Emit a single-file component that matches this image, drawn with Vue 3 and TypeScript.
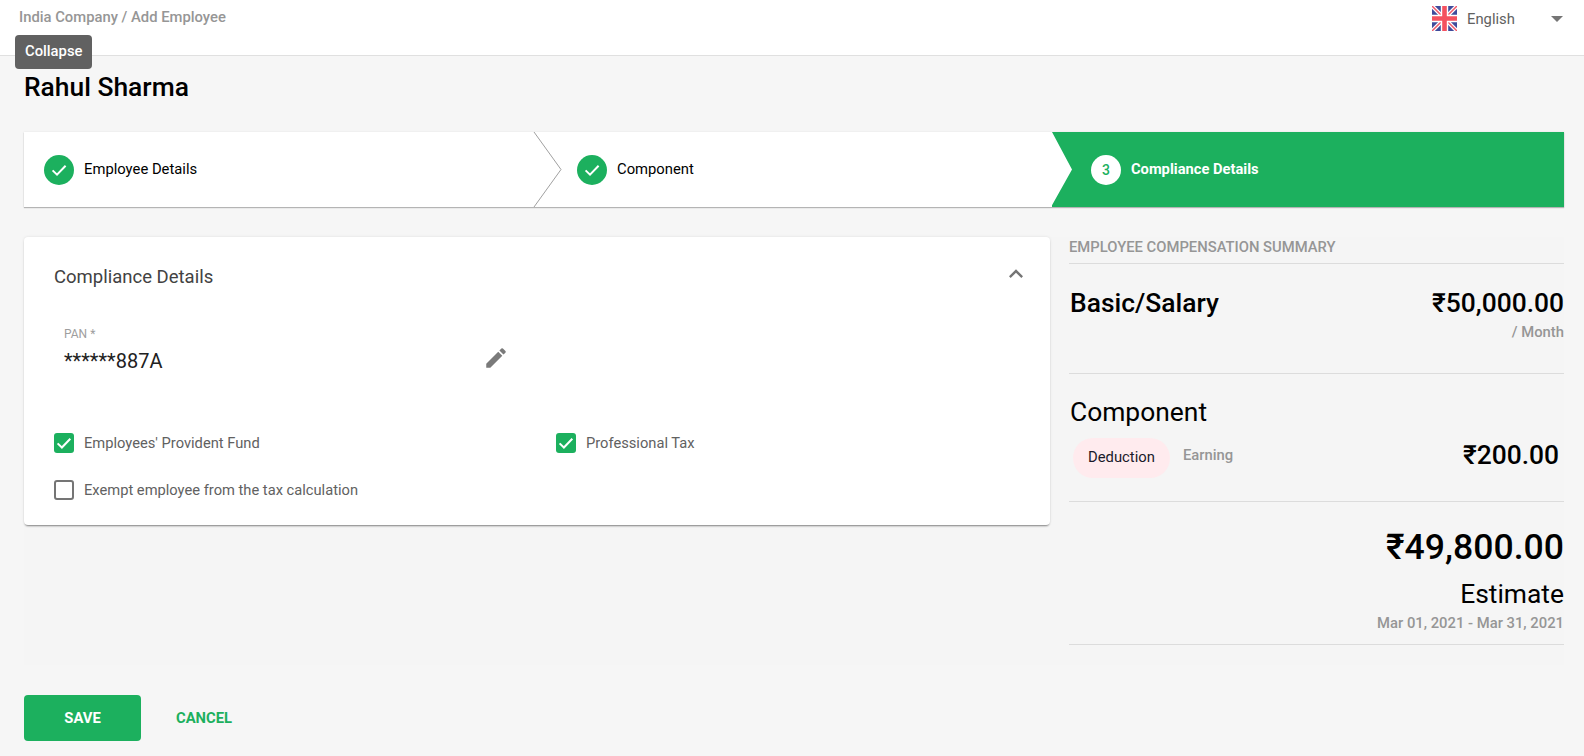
<script setup lang="ts">
const steps = [
  { label: 'Employee Details', done: true },
  { label: 'Component', done: true },
];
</script>

<template>
  <div class="page">
    <header class="topbar">
      <div class="crumb">India Company / Add Employee</div>
      <div class="lang">
        <svg class="flag" viewBox="0 0 25 25" width="25" height="25">
          <rect width="25" height="25" fill="#3f4b9b" />
          <path d="M0 0L25 25M25 0L0 25" stroke="#fff" stroke-width="4" />
          <path d="M0 0L25 25M25 0L0 25" stroke="#f0596b" stroke-width="1.5" />
          <path d="M12.5 0V25M0 12.5H25" stroke="#fff" stroke-width="7.4" />
          <path d="M12.5 0V25M0 12.5H25" stroke="#f4515f" stroke-width="4.6" />
        </svg>
        <span class="lang-name">English</span>
        <span class="caret"></span>
      </div>
      <div class="tooltip">Collapse</div>
    </header>

    <main class="content">
      <h1 class="name">Rahul Sharma</h1>

      <div class="stepper">
        <div v-for="s in steps" :key="s.label" class="step">
          <span class="bubble">
            <svg viewBox="0 0 30 30" width="30" height="30">
              <path d="M8.6 15.4l4.4 4.3 8.6-9" fill="none" stroke="#fff" stroke-width="2" />
            </svg>
          </span>
          <span class="step-label">{{ s.label }}</span>
          <svg class="chevron" viewBox="0 0 30 75" width="30" height="75">
            <path d="M1 0L28 37.5L1 75" fill="none" stroke="#a0a0a0" stroke-width="1" />
          </svg>
        </div>
        <div class="step active">
          <span class="bubble white">3</span>
          <span class="step-label">Compliance Details</span>
        </div>
      </div>

      <div class="columns">
        <section class="card">
          <div class="card-head">
            <h2>Compliance Details</h2>
            <svg class="collapse-icon" viewBox="0 0 24 24" width="28" height="28">
              <path d="M7.41 15.41 12 10.83l4.59 4.58L18 14l-6-6-6 6z" fill="#757575" />
            </svg>
          </div>
          <div class="pan">
            <div class="pan-field">
              <div class="pan-label">PAN *</div>
              <div class="pan-value">******887A</div>
            </div>
            <svg class="edit" viewBox="0 0 24 24" width="26" height="26">
              <path d="M3 17.25V21h3.75L17.81 9.94l-3.75-3.75L3 17.25zM20.71 7.04a1 1 0 0 0 0-1.41l-2.34-2.34a1 1 0 0 0-1.41 0l-1.83 1.83 3.75 3.75 1.83-1.83z" fill="#7a7a7a" />
            </svg>
          </div>
          <div class="checks">
            <label class="check">
              <span class="box on">
                <svg viewBox="0 0 20 20" width="20" height="20"><path d="M3.6 10.4l4.3 4.1 8.4-8.8" fill="none" stroke="#fff" stroke-width="2" /></svg>
              </span>
              Employees' Provident Fund
            </label>
            <label class="check">
              <span class="box on">
                <svg viewBox="0 0 20 20" width="20" height="20"><path d="M3.6 10.4l4.3 4.1 8.4-8.8" fill="none" stroke="#fff" stroke-width="2" /></svg>
              </span>
              Professional Tax
            </label>
            <label class="check">
              <span class="box"></span>
              Exempt employee from the tax calculation
            </label>
          </div>
        </section>

        <aside class="summary">
          <div class="sum-title">Employee Compensation Summary</div>
          <div class="sum-basic">
            <div class="row">
              <span class="big medium">Basic/Salary</span>
              <span class="big medium">₹50,000.00</span>
            </div>
            <div class="muted right month">/ Month</div>
          </div>
          <div class="sum-comp">
            <div class="big">Component</div>
            <div class="row comp-row">
              <div class="chips">
                <span class="chip">Deduction</span>
                <span class="muted earning">Earning</span>
              </div>
              <span class="big medium comp-amount">₹200.00</span>
            </div>
          </div>
          <div class="sum-total">
            <div class="total">₹49,800.00</div>
            <div class="big estimate">Estimate</div>
            <div class="muted dates">Mar 01, 2021 - Mar 31, 2021</div>
          </div>
        </aside>
      </div>

      <div class="actions">
        <button class="save" type="button">SAVE</button>
        <button class="cancel" type="button">CANCEL</button>
      </div>
    </main>
  </div>
</template>

<style>
html, body { margin: 0; background: #f6f6f6; overflow: hidden; }
</style>

<style scoped>
.page {
  width: 1584px;
  height: 756px;
  overflow: hidden;
  position: relative;
  font-family: Roboto, "Noto Sans", sans-serif;
  font-size: 14.8px;
  color: #000;
  background: #f6f6f6;
}
.topbar {
  position: relative;
  height: 56px;
  box-sizing: border-box;
  background: #fff;
  border-bottom: 1px solid #e0e0e0;
  display: flex;
  justify-content: space-between;
  align-items: flex-start;
  padding: 0 21px 0 19px;
}
.crumb {
  line-height: 34px;
  font-weight: 500;
  color: #969696;
}
.lang { display: flex; align-items: center; height: 37px; }
.flag { display: block; }
.lang-name { margin-left: 10px; width: 84px; color: #616161; }
.caret {
  width: 0;
  height: 0;
  border-left: 6px solid transparent;
  border-right: 6px solid transparent;
  border-top: 6px solid #757575;
}
.tooltip {
  position: absolute;
  left: 15px;
  top: 35px;
  width: 77px;
  height: 34px;
  box-sizing: border-box;
  padding-left: 10px;
  line-height: 32px;
  background: #616161;
  border-radius: 4px;
  color: #fff;
  font-weight: 500;
}
.content { padding: 0 20px 0 24px; }
.name {
  margin: 0;
  padding-top: 16px;
  height: 76px;
  box-sizing: border-box;
  font-size: 26.4px;
  line-height: 30px;
  font-weight: 500;
}
.stepper {
  display: flex;
  height: 75px;
  background: #fff;
  box-shadow: 0 1px 1px rgba(0, 0, 0, 0.25), 0 0 2px rgba(0, 0, 0, 0.08);
}
.step {
  position: relative;
  display: flex;
  align-items: center;
  width: 509px;
  padding-left: 20px;
  box-sizing: border-box;
}
.step:nth-child(2) { width: 519px; padding-left: 44px; }
.chevron { position: absolute; right: -27px; top: 0; z-index: 1; }
.step:nth-child(1) .chevron { right: -30px; }
.step:nth-child(2) .chevron { display: none; }
.step.active {
  flex: 1;
  width: auto;
  padding-left: 39px;
  background: #1cb05e;
  color: #fff;
  clip-path: polygon(0 0, 100% 0, 100% 100%, -1px 100%, 20px 50%);
}
.bubble {
  width: 30px;
  height: 30px;
  border-radius: 50%;
  background: #1cb05e;
  display: flex;
  align-items: center;
  justify-content: center;
  flex: none;
  font-size: 14px;
}
.bubble.white { background: #fff; color: #1cb05e; font-weight: 500; }
.step-label { margin: -2px 0 0 10px; }
.active .step-label { font-weight: 700; font-size: 14.7px; }
.columns {
  display: grid;
  grid-template-columns: 1026px 495px;
  column-gap: 19px;
  margin-top: 30px;
  align-items: start;
  height: 428px;
  background: #f5f5f5;
}
.card {
  height: 288px;
  box-sizing: border-box;
  background: #fff;
  border-radius: 4px;
  box-shadow: 0 2px 2px -1px rgba(0, 0, 0, 0.45), 0 0 3px rgba(0, 0, 0, 0.1);
  padding: 0 20px 0 30px;
}
.card-head {
  display: flex;
  justify-content: space-between;
  align-items: center;
  height: 76px;
  padding-top: 1px;
  box-sizing: border-box;
}
.card-head h2 {
  margin: 0;
  font-size: 18.5px;
  font-weight: 400;
  color: #424242;
  padding-top: 2px;
}
.collapse-icon { margin: -4px 0 0 0; }
.pan {
  display: flex;
  align-items: flex-start;
  width: 445px;
  justify-content: space-between;
  padding-left: 10px;
  padding-top: 14px;
}
.pan-label { font-size: 12px; line-height: 14px; color: #9e9e9e; }
.pan-value { font-size: 20px; line-height: 28px; margin-top: 6px; color: #212121; }
.edit { margin-top: 18px; }
.checks {
  display: grid;
  grid-template-columns: 502px 1fr;
  row-gap: 27px;
  margin-top: 58px;
}
.check {
  display: flex;
  align-items: center;
  height: 20px;
  font-size: 14.7px;
  color: #616161;
}
.box {
  width: 20px;
  height: 20px;
  box-sizing: border-box;
  border: 2px solid #757575;
  border-radius: 3px;
  margin-right: 10px;
  flex: none;
}
.box.on { border: 0; background: #1cb05e; }
.box svg { display: block; }
.summary { padding-top: 2px; }
.sum-title {
  text-transform: uppercase;
  font-weight: 500;
  color: #969696;
  line-height: 16px;
  padding-bottom: 8px;
  border-bottom: 1px solid #dcdcdc;
}
.row { display: flex; justify-content: space-between; align-items: center; }
.big { font-size: 26.4px; line-height: 28px; }
.medium { font-weight: 500; }
.muted { color: #969696; font-weight: 500; }
.right { text-align: right; }
.sum-basic {
  height: 110px;
  box-sizing: border-box;
  padding: 25px 0 0 1px;
  border-bottom: 1px solid #dcdcdc;
}
.month { margin-top: 7px; line-height: 16px; }
.sum-comp {
  height: 128px;
  box-sizing: border-box;
  padding: 24px 0 0 1px;
  border-bottom: 1px solid #dcdcdc;
}
.comp-row { margin-top: 12px; align-items: center; }
.chips { display: flex; align-items: center; padding-left: 3px; }
.chip {
  width: 97px;
  height: 40px;
  padding-bottom: 2px;
  box-sizing: border-box;
  border-radius: 20px;
  background: #ffebee;
  display: flex;
  align-items: center;
  justify-content: center;
  color: #1a1a2a;
}
.earning { margin-left: 13px; margin-top: -6px; }
.comp-amount { margin: -6px 5px 0 0; }
.sum-total {
  height: 143px;
  box-sizing: border-box;
  padding-top: 26px;
  text-align: right;
  border-bottom: 1px solid #dcdcdc;
}
.total { font-size: 35.6px; line-height: 38px; font-weight: 500; }
.estimate { margin-top: 14px; }
.dates { margin-top: 7px; line-height: 16px; }
.actions {
  margin-top: 30px;
  display: flex;
  align-items: center;
}
.save, .cancel {
  font-family: inherit;
  font-size: 14.8px;
  font-weight: 700;
  border: 0;
  padding: 0;
  cursor: pointer;
}
.save {
  width: 117px;
  height: 46px;
  border-radius: 4px;
  background: #1cb05e;
  color: #fff;
}
.cancel {
  margin-left: 35px;
  background: none;
  color: #1cb05e;
}
</style>
